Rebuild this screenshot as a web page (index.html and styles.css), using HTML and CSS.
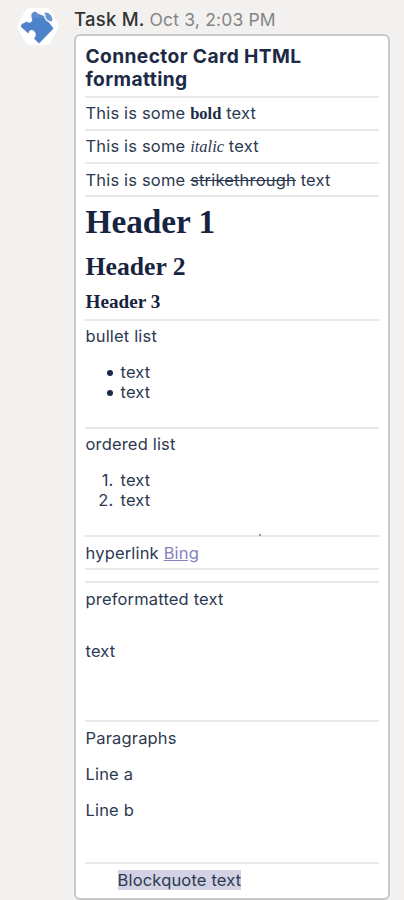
FILE: index.html
```html
<!DOCTYPE html>
<html lang="en">
<head>
<meta charset="utf-8">
<title>Connector Card HTML formatting</title>
<link rel="stylesheet" href="styles.css">
</head>
<body>
<main class="message">
  <svg class="avatar" viewBox="0 0 42 38" aria-hidden="true">
    <path d="M13 0H29Q32 0 33.500 2.500L41 16Q42 18.500 41 21L33.500 34.500Q32 37 29 37H13Q10 37 8.500 34.500L1 21Q0 18.500 1 16L8.500 2.500Q10 0 13 0Z" fill="#fff"/>
    <path d="M14.500 6L16.500 4Q19 3 20.500 5.500L27 8Q27.500 12 32 14.500L36.500 20.500L22 35.500L17 30.500Q19.500 28 18.500 25Q17 21.500 13.500 22Q11.500 23 11.500 25.500L4 19Q3.500 16.500 6 15.500L10 13.500Q12.500 16 14.500 13.500Q16 11.500 14.500 9.500Z" fill="#4e83cb"/>
    <path d="M27 5Q31 3.500 34 7.500Q36.500 11.500 34.500 13.500Q30 13 28.500 9Q29.500 7 27 5Z" fill="#6594d4"/>
    <path d="M14.500 6L16.500 4Q19 3 20.500 5.500L27 8V10H14.500Z" fill="#83a9dd" opacity=".3"/>
  </svg>
  <div class="content">
    <header class="byline"><span class="author">Task M.</span> <time class="time">Oct 3, 2:03 PM</time></header>
    <article class="card">
      <section class="row title-row"><h4 class="title">Connector Card HTML formatting</h4></section>
      <section class="row line-row raised">This is some <b>bold</b> text</section>
      <section class="row line-row raised">This is some <i>italic</i> text</section>
      <section class="row line-row">This is some <s>strikethrough</s> text</section>
      <section class="row headers-row"><h1>Header 1</h1><h2>Header 2</h2><h3>Header 3</h3></section>
      <section class="row list-row raised">bullet list<ul><li>text</li><li>text</li></ul></section>
      <section class="row list-row raised speck">ordered list<ol><li>text</li><li>text</li></ol></section>
      <section class="row line-row">hyperlink <a class="link" href="#">Bing</a></section>
      <section class="row empty-row"></section>
      <section class="row pre-row">preformatted text<pre>text</pre></section>
      <section class="row para-row">Paragraphs<p>Line a</p><p>Line b</p></section>
      <section class="row quote-row"><blockquote><span class="selected">Blockquote text</span></blockquote></section>
    </article>
  </div>
</main>
</body>
</html>
```
FILE: styles.css
```css
* { box-sizing: border-box; }
body {
  margin: 0;
  height: 900px;
  overflow: hidden;
  background: #f2f1ef;
  color: #2d3950;
  font: 16.5px/20px Inter, sans-serif;
  letter-spacing: .17px;
}
.message { display: flex; padding: 8px 14px 0 17px; gap: 15px; }
.avatar { flex: none; width: 42px; height: 38px; }
.content { width: 316px; }
.byline { height: 26px; line-height: 22px; white-space: nowrap; }
.author { font-size: 18.5px; font-weight: 500; color: #333; letter-spacing: .25px; }
.time { font-size: 17.5px; color: #858585; letter-spacing: .17px; }
.card {
  height: 866px;
  padding: 0 9px;
  border: 2px solid #c8c8c8;
  border-radius: 6px;
  background: #fff;
}
.row { padding: 6px 0 0 .5px; border-bottom: 2px solid #e8e8e8; }
.title-row { height: 62px; padding-top: 9px; }
.title { margin: 0; font-size: 19.2px; line-height: 23px; font-weight: 700; color: #1c2a46; letter-spacing: .38px; }
.line-row { height: 33px; }
.raised { padding-top: 5px; }
.line-row b, .line-row i { font-family: "Liberation Serif", serif; letter-spacing: 0; }
.line-row b { color: #1c2a46; }
.headers-row { height: 124px; padding-top: 4px; letter-spacing: 0; }
h1, h2, h3 { margin: 0; font-family: "Liberation Serif", serif; color: #17243f; }
h1 { font-size: 33.3px; line-height: 41px; }
h2 { margin-top: 9px; font-size: 25.7px; line-height: 32px; }
h3 { margin-top: 8px; font-size: 19.2px; line-height: 22px; }
.list-row { height: 108px; }
ul, ol { margin: 16px 0 0; padding: 0; list-style: none; counter-reset: item; }
li { display: flex; gap: 7px; counter-increment: item; }
ol li::before { content: counter(item) "."; width: 28px; text-align: right; }
ul li::before {
  content: "";
  width: 6px;
  height: 6px;
  margin: 8px 1px 0 21px;
  border-radius: 50%;
  background: #1c2a46;
}
.speck { position: relative; }
.speck::after {
  content: "";
  position: absolute;
  right: 118px;
  bottom: -1px;
  width: 2px;
  height: 2px;
  background: #999;
}
.link { color: #8583c0; }
.empty-row { height: 13px; padding: 0; }
.pre-row { height: 139px; }
pre { margin: 32px 0 0; font: inherit; }
.para-row { height: 142px; }
p { margin: 16px 0 0; }
.quote-row { height: 35px; border: 0; }
blockquote { margin: 0 0 0 32px; }
.selected { background: #d2d2e4; }
```
